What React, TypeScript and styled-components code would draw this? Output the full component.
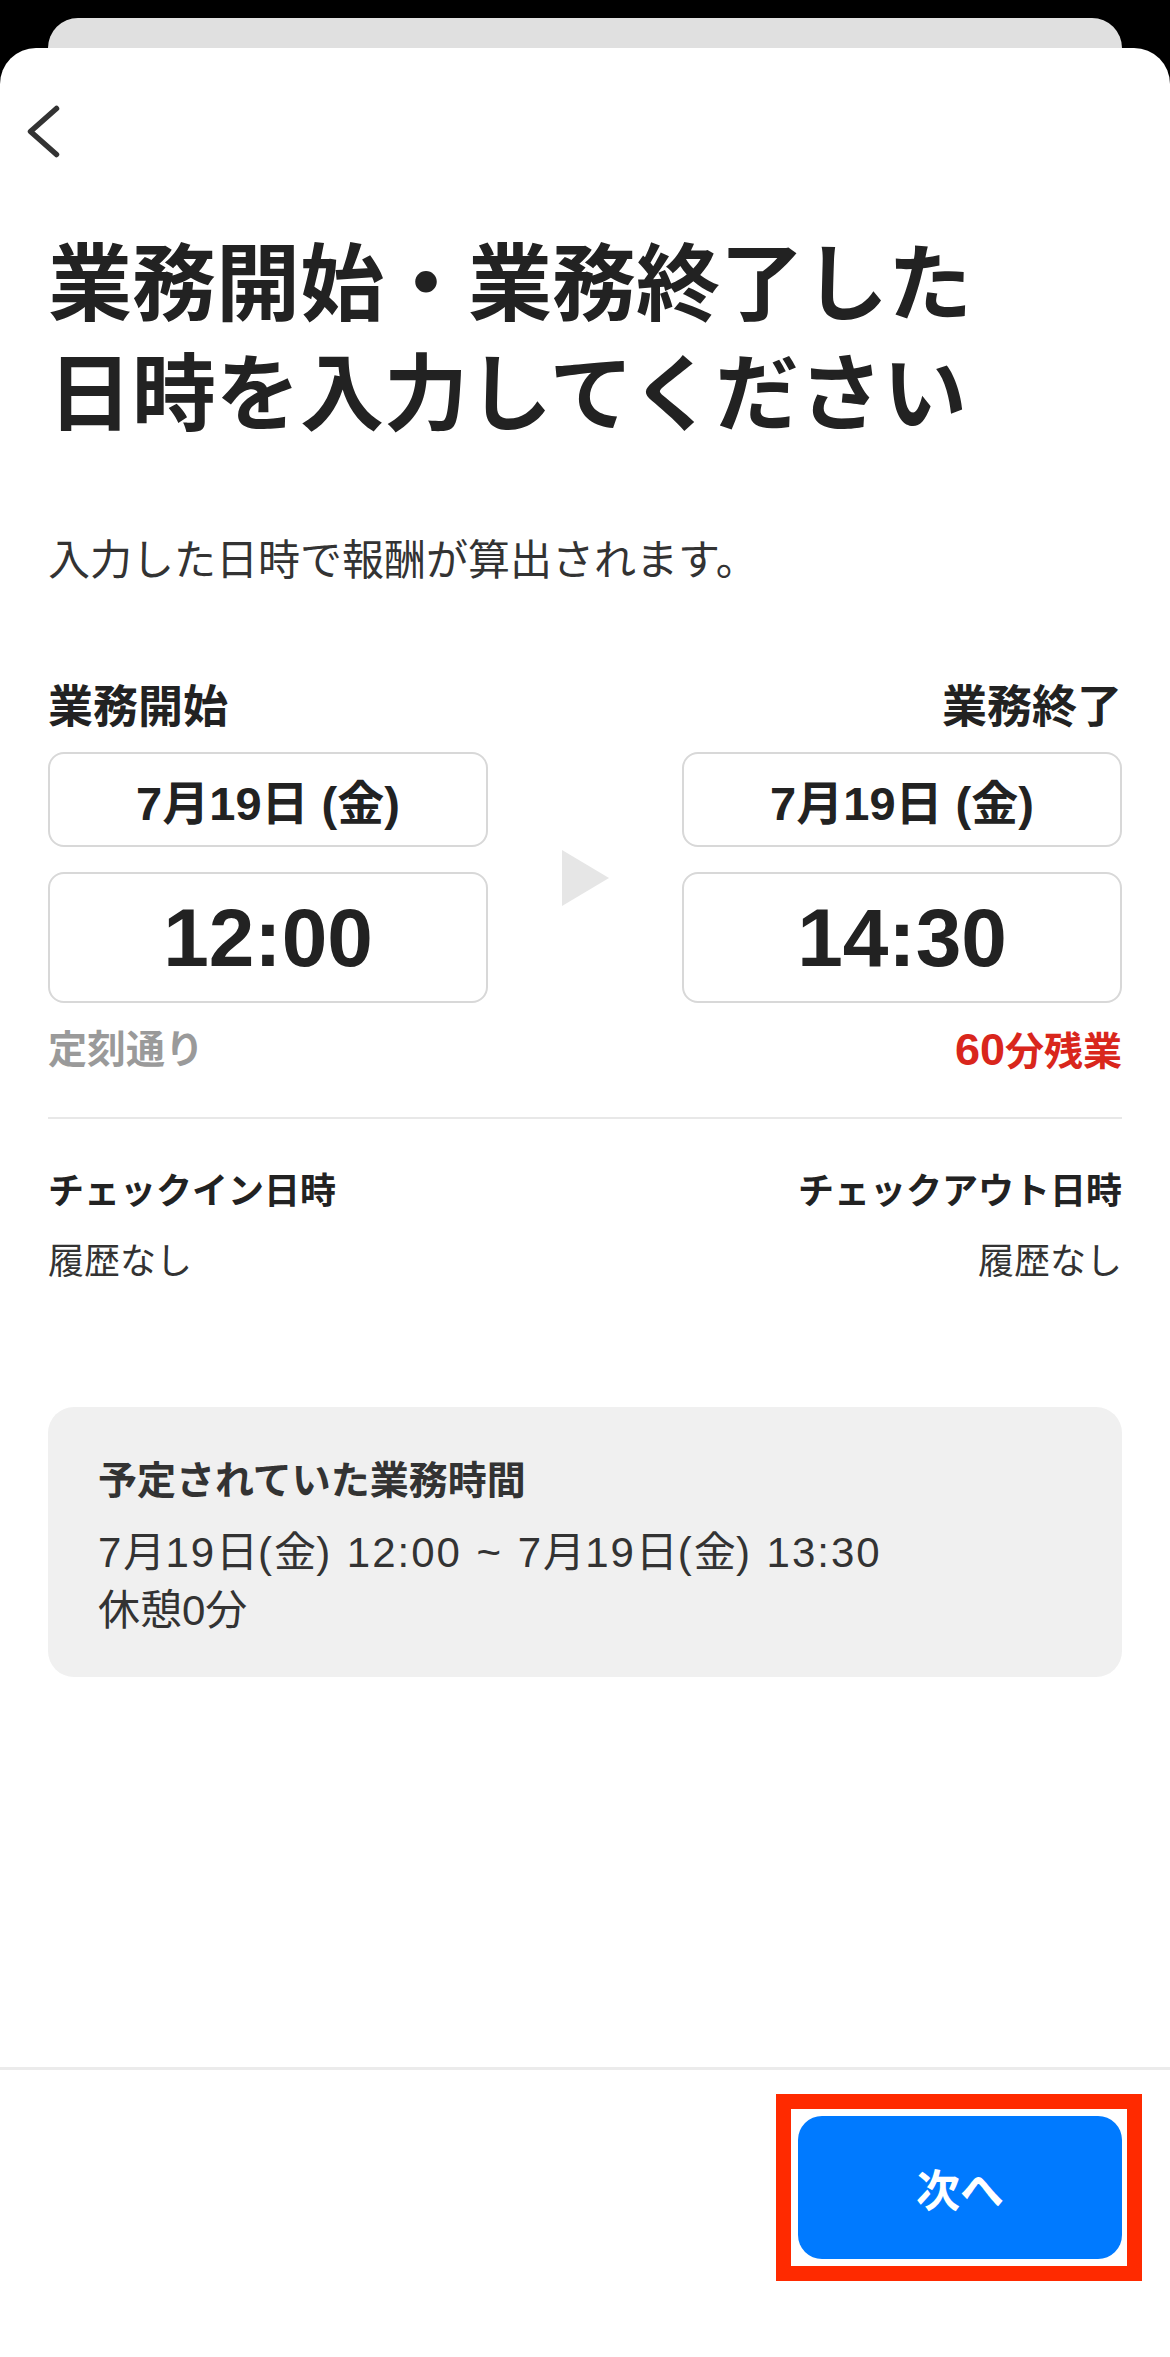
import styled, { createGlobalStyle } from "styled-components";

const GlobalStyle = createGlobalStyle`
  html, body {
    margin: 0;
    padding: 0;
    background: #000;
  }
  body {
    font-family: "Liberation Sans", "Noto Sans CJK JP", sans-serif;
    color: #222;
  }
  * {
    box-sizing: border-box;
  }
`;

const Screen = styled.div`
  display: flex;
  flex-direction: column;
  min-height: 100vh;
  padding-top: 18px;
  background: #000;
`;

/* the sheet stacked behind the current one */
const BackCard = styled.div`
  height: 30px;
  margin: 0 48px;
  background: #e0e0e0;
  border-radius: 30px 30px 0 0;
`;

const Sheet = styled.div`
  flex: 1;
  display: flex;
  flex-direction: column;
  background: #fff;
  border-radius: 36px 36px 0 0;
`;

const Content = styled.div`
  flex: 1;
  padding: 56px 48px 0;
`;

const BackButton = styled.button`
  display: block;
  width: 42px;
  height: 56px;
  margin-left: -24px;
  padding: 0;
  border: none;
  background: none;
  cursor: pointer;
`;

const Title = styled.h1`
  margin: 70px 0 0;
  font-size: 84px;
  line-height: 110px;
  font-weight: 700;
  color: #222;
`;

const Lead = styled.p`
  margin: 81px 0 0;
  font-size: 42px;
  line-height: 60px;
  color: #333;
`;

const TimeGrid = styled.div`
  display: grid;
  grid-template-columns: 440px 1fr 440px;
  grid-template-rows: auto auto auto;
  margin-top: 87px;
`;

const SideLabel = styled.div<{ $align: "left" | "right" }>`
  font-size: 45px;
  line-height: 60px;
  font-weight: 700;
  color: #222;
  text-align: ${(p) => p.$align};
  grid-column: ${(p) => (p.$align === "left" ? 1 : 3)};
`;

const BoxStack = styled.div<{ $col: number }>`
  grid-column: ${(p) => p.$col};
  display: flex;
  flex-direction: column;
  gap: 25px;
  margin-top: 14px;
`;

const ValueBox = styled.div<{ $big?: boolean }>`
  display: flex;
  align-items: center;
  justify-content: center;
  height: ${(p) => (p.$big ? "131px" : "95px")};
  border: 2px solid #d8d8d8;
  border-radius: 16px;
  font-size: ${(p) => (p.$big ? "82px" : "47px")};
  font-weight: 700;
  color: #222;
`;

const ArrowCell = styled.div`
  grid-column: 2;
  grid-row: 2;
  display: flex;
  align-items: center;
  justify-content: center;
  margin-top: 14px;
`;

const Note = styled.div<{ $align: "left" | "right"; $tone: "muted" | "alert" }>`
  grid-column: ${(p) => (p.$align === "left" ? 1 : 3)};
  margin-top: 22px;
  font-size: 39px;
  line-height: 50px;
  font-weight: 700;
  text-align: ${(p) => p.$align};
  color: ${(p) => (p.$tone === "alert" ? "#d9261c" : "#9a9a9a")};
`;

const Digits = styled.span`
  font-size: 45px;
`;

const Divider = styled.hr`
  margin: 40px 0 0;
  border: none;
  height: 2px;
  background: #e8e8e8;
`;

const CheckRow = styled.div`
  display: flex;
  justify-content: space-between;
  margin-top: 48px;
`;

const CheckCol = styled.div<{ $align: "left" | "right" }>`
  display: flex;
  flex-direction: column;
  gap: 20px;
  text-align: ${(p) => p.$align};
`;

const CheckLabel = styled.div`
  font-size: 36px;
  line-height: 50px;
  font-weight: 700;
  color: #222;
`;

const CheckValue = styled.div`
  font-size: 36px;
  line-height: 50px;
  color: #333;
`;

const ScheduleBox = styled.div`
  margin-top: 120px;
  padding: 47px 50px 37px;
  background: #f0f0f0;
  border-radius: 26px;
`;

const ScheduleTitle = styled.div`
  font-size: 39px;
  line-height: 54px;
  font-weight: 700;
  color: #333;
`;

const ScheduleBody = styled.div`
  margin-top: 16px;
  font-size: 42px;
  line-height: 58px;
  color: #333;
`;

const Latin = styled.span`
  letter-spacing: 2px;
  word-spacing: 1px;
`;

const Footer = styled.div`
  display: flex;
  justify-content: flex-end;
  padding: 46px 48px 98px;
  border-top: 3px solid #ebebeb;
`;

/* red annotation frame drawn around the button */
const HighlightFrame = styled.div`
  display: flex;
  margin: -22px -20px -22px -22px;
  padding: 7px 5px 7px 7px;
  border: 15px solid #ff2a00;
`;

const PrimaryButton = styled.button`
  width: 324px;
  height: 143px;
  border: none;
  border-radius: 24px;
  background: #007aff;
  color: #fff;
  font-family: inherit;
  font-size: 44px;
  font-weight: 700;
  cursor: pointer;
`;

const ChevronLeft = () => (
  <svg width="42" height="56" viewBox="0 0 42 56" fill="none">
    <path
      d="M32.5 4.5 L6.5 27.5 L32.5 50.5"
      stroke="#333"
      strokeWidth="5.5"
      strokeLinecap="round"
      strokeLinejoin="round"
    />
  </svg>
);

const PlayArrow = () => (
  <svg width="47" height="56" viewBox="0 0 47 56">
    <polygon points="0,0 47,28 0,56" fill="#e6e6e6" />
  </svg>
);

const App = () => {
  return (
    <>
      <GlobalStyle />
      <Screen>
        <BackCard />
        <Sheet>
          <Content>
            <BackButton aria-label="戻る">
              <ChevronLeft />
            </BackButton>
            <Title>
              業務開始・業務終了した
              <br />
              日時を入力してください
            </Title>
            <Lead>入力した日時で報酬が算出されます。</Lead>

            <TimeGrid>
              <SideLabel $align="left">業務開始</SideLabel>
              <SideLabel $align="right">業務終了</SideLabel>

              <BoxStack $col={1}>
                <ValueBox>7月19日 (金)</ValueBox>
                <ValueBox $big>12:00</ValueBox>
              </BoxStack>
              <ArrowCell>
                <PlayArrow />
              </ArrowCell>
              <BoxStack $col={3}>
                <ValueBox>7月19日 (金)</ValueBox>
                <ValueBox $big>14:30</ValueBox>
              </BoxStack>

              <Note $align="left" $tone="muted">
                定刻通り
              </Note>
              <Note $align="right" $tone="alert">
                <Digits>60</Digits>分残業
              </Note>
            </TimeGrid>

            <Divider />

            <CheckRow>
              <CheckCol $align="left">
                <CheckLabel>チェックイン日時</CheckLabel>
                <CheckValue>履歴なし</CheckValue>
              </CheckCol>
              <CheckCol $align="right">
                <CheckLabel>チェックアウト日時</CheckLabel>
                <CheckValue>履歴なし</CheckValue>
              </CheckCol>
            </CheckRow>

            <ScheduleBox>
              <ScheduleTitle>予定されていた業務時間</ScheduleTitle>
              <ScheduleBody>
                <Latin>7</Latin>月<Latin>19</Latin>日<Latin>(</Latin>金
                <Latin>) 12:00 ~ 7</Latin>月<Latin>19</Latin>日
                <Latin>(</Latin>金<Latin>) 13:30</Latin>
                <br />
                休憩0分
              </ScheduleBody>
            </ScheduleBox>
          </Content>

          <Footer>
            <HighlightFrame>
              <PrimaryButton>次へ</PrimaryButton>
            </HighlightFrame>
          </Footer>
        </Sheet>
      </Screen>
    </>
  );
};

export default App;
